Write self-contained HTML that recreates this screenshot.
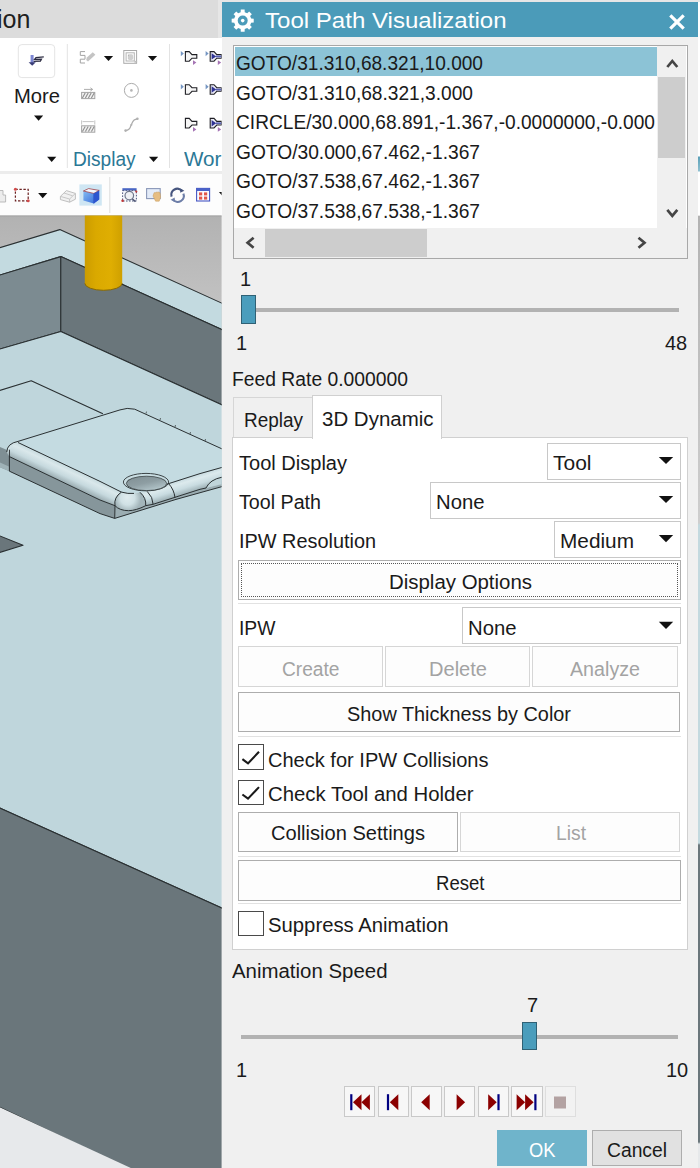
<!DOCTYPE html>
<html lang="en"><head><meta charset="utf-8"><title>Tool Path Visualization</title>
<style>
html,body{margin:0;padding:0}
body{width:700px;height:1168px;overflow:hidden;position:relative;background:#f0f0f0;font-family:'Liberation Sans', sans-serif}
.t{position:absolute;white-space:pre;transform-origin:0 0;display:block}
.b{position:absolute;box-sizing:border-box}
svg{position:absolute;left:0;top:0}

.btn{background:#fdfdfd;border:1px solid #adadad}
.dd{background:#fff;border:1px solid #c8c8c8}
.cb{background:#fff;border:1px solid #4a4a4a}
.pb{background:#f7f7f7;border:1px solid #c9c9c9}

</style></head><body>
<div class="b " style="left:0px;top:0px;width:222px;height:38px;background:#dcdcdc"></div><div class="b " style="left:0px;top:38px;width:222px;height:134px;background:#fff"></div><div class="b " style="left:0px;top:171px;width:222px;height:3px;background:#ececec"></div><div class="b " style="left:0px;top:174px;width:222px;height:42px;background:#fdfdfd"></div><svg width="222" height="1168" viewBox="0 0 222 1168"><defs>
<linearGradient id="bg" x1="0" y1="0" x2="0" y2="1"><stop offset="0" stop-color="#b2b2b2"/><stop offset="1" stop-color="#c8c8c8"/></linearGradient>
<linearGradient id="tool" x1="0" y1="0" x2="1" y2="0"><stop offset="0" stop-color="#cc9c00"/><stop offset="0.3" stop-color="#daa900"/><stop offset="0.7" stop-color="#dfae02"/><stop offset="1" stop-color="#cfa000"/></linearGradient>
<linearGradient id="fil1" gradientUnits="userSpaceOnUse" x1="60" y1="462.4" x2="52.6" y2="478"><stop offset="0" stop-color="#c6dade"/><stop offset="0.25" stop-color="#dae8eb"/><stop offset="0.6" stop-color="#c6d9de"/><stop offset="0.85" stop-color="#a7b9be"/><stop offset="1" stop-color="#94a6ab"/></linearGradient>
<linearGradient id="fil2" gradientUnits="userSpaceOnUse" x1="180" y1="480" x2="184.4" y2="494.4"><stop offset="0" stop-color="#c8dbe0"/><stop offset="0.25" stop-color="#dceaed"/><stop offset="0.6" stop-color="#c9dce1"/><stop offset="0.85" stop-color="#adc0c5"/><stop offset="1" stop-color="#9cafb4"/></linearGradient><radialGradient id="corn" gradientUnits="userSpaceOnUse" cx="128" cy="498.5" r="13" fx="127" fy="497"><stop offset="0" stop-color="#e0ecef"/><stop offset="0.55" stop-color="#d0e1e5"/><stop offset="1" stop-color="#a3b5ba"/></radialGradient>
<linearGradient id="hole" x1="0.1" y1="0" x2="0.75" y2="1"><stop offset="0" stop-color="#808f94"/><stop offset="0.5" stop-color="#8e9ea3"/><stop offset="0.85" stop-color="#aabcc1"/><stop offset="1" stop-color="#bccfd4"/></linearGradient>
<clipPath id="vp"><rect x="0" y="215.5" width="221.6" height="953"/></clipPath>
</defs><g clip-path="url(#vp)" stroke-linejoin="round"><rect x="0" y="215" width="222" height="125" fill="url(#bg)"/><rect x="0" y="215.3" width="222" height="1" fill="#9a9a9a"/><polygon points="-3,248.6 59.8,229.6 225,304.6 225,331 60.8,256.6 -3,275.9" fill="#c3dae0" stroke="#2a3032" stroke-width="1.1"/><polygon points="-3,275.9 60.8,256.6 60.8,331.5 -3,349.9" fill="#7c8b91" stroke="#2a3032" stroke-width="1.1"/><polygon points="60.8,256.6 225,331 225,406.2 60.8,331.5" fill="#6a767b" stroke="#2a3032" stroke-width="1.1"/><polygon points="-3,349.9 60.8,331.5 225,406.2 225,909.4 -3,806.7" fill="#bfd6dc" stroke="#2a3032" stroke-width="1.1"/><polygon points="-3,806.7 225,909.4 225,1172 135,1172 -3,1105.8" fill="#6a767b" stroke="#2a3032" stroke-width="1.1"/><polygon points="0,1107.6 133,1169 0,1169" fill="#e7e9eb"/><polyline points="-3,391.3 31.2,380.8 102.9,413.7" fill="none" stroke="#2a3032" stroke-width="1.1"/><path d="M84.8,215 H122.2 V283.3 A18.7,7 0 0 1 84.8,283.3Z" fill="url(#tool)"/><path d="M84.8,283.3 A18.7,7 0 0 0 122.2,283.3" fill="none" stroke="#8a6a00" stroke-width="1"/><polygon points="-3,534.8 23,545.2 -3,553.3" fill="#6a767b" stroke="#2a3032" stroke-width="1.1"/><polygon points="-2,446 9.4,451 9.4,471.2 -2,466.4" fill="#7f8f94"/><polygon points="-2,461.6 9.4,466.8 9.4,471.2 -2,466.4" fill="#9fb2b7"/><polygon points="9.4,456.6 100,500 115,505.7 114.7,518.4 100,513.6 9.4,471.2" fill="#86969b"/><polygon points="114.7,518.4 115,505.7 128.6,510.7 145.7,505.7 153.1,504.3 200,489.3 222,484 222,486.6 176,499.4" fill="#9badb2"/><path d="M18,442.5 L100,481.4 L121.4,492.1 Q113.5,497.5 115,505.7 L100,500 L9.4,456.6 Q6.6,447 18,442.5Z" fill="url(#fil1)"/><path d="M140,492.3 Q147,491.2 168.6,483.6 L200,473.6 L222,467.4 L222,484 L200,489.3 L153.1,504.3 L145.7,505.7 Q146.5,498 140,492.3Z" fill="url(#fil2)"/><path d="M206,488 Q210,479.5 222,477.2 L222,484Z" fill="#c0d5da"/><path d="M121.4,492.1 Q130,494.2 140,492.3 Q146.5,498 145.7,505.7 Q136,510.6 128.6,510.7 Q119.5,510.6 115,505.7 Q113.5,497.5 121.4,492.1Z" fill="url(#corn)"/><path d="M18,441.4 Q8,442.5 6.8,450.5 L8.4,456 Q8.6,446.5 18,442.5Z" fill="#d2e3e7"/><path d="M18,441.4 L120,409.9 Q127,407.3 134.7,409.2 L222,448.9 L222,467.4 L200,473.6 L168.6,483.6 Q147,491.2 140,492.3 Q130,494.2 121.4,492.1 L100,481.4 L18,442.5Z" fill="#c4dbe1"/><ellipse cx="146" cy="482.1" rx="22.6" ry="8.7" fill="#c9dde2" stroke="#2d3335" stroke-width="0.9"/><ellipse cx="146.5" cy="483.4" rx="20.2" ry="7.2" fill="url(#hole)" stroke="#2d3335" stroke-width="0.7"/><path d="M6.8,452 Q7,443.5 18,441.4 L120,409.9 Q127,407.3 134.7,409.2 L222,448.9" stroke="#2a3032" stroke-width="1" fill="none"/><path d="M18,442.5 L100,481.4 L121.4,492.1 Q128,494 134,493.4" stroke="#2a3032" stroke-width="1" fill="none"/><path d="M166.5,484.3 L200,473.6 L222,467.4" stroke="#2a3032" stroke-width="1" fill="none"/><path d="M9.4,449.7 V471.2 L100,513.6 L114.7,518.4 L176,499.4 L222,486.6" stroke="#2a3032" stroke-width="1" fill="none"/><path d="M9.4,456.6 L100,500 L115,505.7 Q119.5,510.6 128.6,510.7 Q136,510.6 145.7,505.7 L153.1,504.3 L200,489.3 L206,488 Q210,479.5 222,477.2" stroke="#2a3032" stroke-width="1" fill="none"/><path d="M115,505.7 L114.7,518.4" stroke="#2a3032" stroke-width="1" fill="none"/><path d="M121.4,492.1 Q113.5,497.5 115,505.7" stroke="#2a3032" stroke-width="1" fill="none"/><path d="M140,492.3 Q146.5,498 145.7,505.7" stroke="#2a3032" stroke-width="1" fill="none"/><path d="M147.2,491.4 Q153,497 153.1,504.3" stroke="#2a3032" stroke-width="1" fill="none"/><path d="M168.6,483.6 Q174,489.5 175,497.6" stroke="#2a3032" stroke-width="1" fill="none"/><line x1="146" y1="413.6" x2="146.5" y2="411.6" stroke="#2d3335" stroke-width="0.7"/><line x1="160" y1="420" x2="160.5" y2="418" stroke="#2d3335" stroke-width="0.7"/><line x1="175" y1="427" x2="175.5" y2="425" stroke="#2d3335" stroke-width="0.7"/><line x1="190" y1="434" x2="190.5" y2="432" stroke="#2d3335" stroke-width="0.7"/><line x1="205" y1="441" x2="205.5" y2="439" stroke="#2d3335" stroke-width="0.7"/></g></svg><svg width="222" height="216" viewBox="0 0 222 216"><defs>
<linearGradient id="cube" x1="0" y1="0" x2="1" y2="1"><stop offset="0" stop-color="#8cc4f4"/><stop offset="1" stop-color="#2f63d8"/></linearGradient>
<clipPath id="rb"><rect x="0" y="0" width="221.6" height="216"/></clipPath>
</defs><g clip-path="url(#rb)"><rect x="66.8" y="44" width="1" height="124" fill="#e3e3e3"/><rect x="169" y="44" width="1" height="124" fill="#e3e3e3"/><rect x="109.3" y="177" width="1" height="36" fill="#dcdcdc"/><rect x="18.3" y="44.6" width="36.4" height="33" rx="3.5" fill="#fff" stroke="#e4e4e4" stroke-width="1"/><rect x="30.6" y="55" width="3" height="8.5" fill="#7c86d2"/><path d="M28.6,62.2 h7.2 l-3.6,3.6z" fill="#3b3f78"/><path d="M43.8,56.9 L36,57.6 L34.6,59.4 L41.4,59.2 L40.4,61 L33.6,61.4" fill="none" stroke="#2e2e44" stroke-width="1.3"/><path d="M34.0,115.6 h9.2 l-4.6,5.2z" fill="#111"/><path d="M47.1,156.7 h9.2 l-4.6,5.2z" fill="#111"/><path d="M149.0,156.7 h9.2 l-4.6,5.2z" fill="#111"/><path d="M103.9,55.9 h9.2 l-4.6,5.2z" fill="#111"/><path d="M147.9,55.9 h9.2 l-4.6,5.2z" fill="#111"/><path d="M85,51.6 H80.3 V55.4 H85 V59.2 H80.3 V63 H85" fill="none" stroke="#a4a4a4" stroke-width="1"/><path d="M86.8,57.6 L92.8,52.2 L95.4,54.8 L90.2,59.6 L88,61.5 L86.2,60z" fill="#c4c4c4"/><rect x="123.8" y="50.5" width="12.8" height="12.8" fill="none" stroke="#a9a9a9" stroke-width="1"/><rect x="126.1" y="52.8" width="8.200000000000001" height="8.200000000000001" fill="none" stroke="#b4b4b4" stroke-width="1"/><rect x="128.4" y="55.1" width="3.6000000000000014" height="3.6000000000000014" fill="none" stroke="#a9a9a9" stroke-width="1"/><circle cx="130.6" cy="57.4" r="2.6" fill="#d0d0d0"/><path d="M134,60 l3.6,2 l-2,0.6 l-0.6,2z" fill="#c0c0c0"/><rect x="81.6" y="92.4" width="13.2" height="6.2" fill="#f2f2f2" stroke="#a4a4a4" stroke-width="1"/><line x1="82.4" y1="98.00000000000001" x2="85.2" y2="93.0" stroke="#8e8e8e" stroke-width="1.1"/><line x1="85.4" y1="98.00000000000001" x2="88.2" y2="93.0" stroke="#8e8e8e" stroke-width="1.1"/><line x1="88.4" y1="98.00000000000001" x2="91.2" y2="93.0" stroke="#8e8e8e" stroke-width="1.1"/><line x1="91.4" y1="98.00000000000001" x2="94.2" y2="93.0" stroke="#8e8e8e" stroke-width="1.1"/><path d="M84,89.4 H92.4 M90.4,87.8 L92.6,89.4 L90.4,91" fill="none" stroke="#a4a4a4" stroke-width="0.9"/><circle cx="131.4" cy="90.4" r="7" fill="none" stroke="#ababab" stroke-width="1"/><circle cx="131.4" cy="90.4" r="1.3" fill="#b5b5b5"/><rect x="81.6" y="125.8" width="13.2" height="6.4" fill="#f2f2f2" stroke="#a4a4a4" stroke-width="1"/><line x1="82.4" y1="131.6" x2="85.2" y2="126.39999999999999" stroke="#8e8e8e" stroke-width="1.1"/><line x1="85.4" y1="131.6" x2="88.2" y2="126.39999999999999" stroke="#8e8e8e" stroke-width="1.1"/><line x1="88.4" y1="131.6" x2="91.2" y2="126.39999999999999" stroke="#8e8e8e" stroke-width="1.1"/><line x1="91.4" y1="131.6" x2="94.2" y2="126.39999999999999" stroke="#8e8e8e" stroke-width="1.1"/><path d="M81.6,124.6 V120.4 M94.8,124.6 V120.4 M82.6,121.6 H93.8" fill="none" stroke="#bdbdbd" stroke-width="0.9"/><path d="M125.6,130.6 C131.4,130 130,126 131.4,124.6 C132.8,122 132.4,119.4 137.4,118.8" fill="none" stroke="#ababab" stroke-width="1.3"/><circle cx="125.6" cy="130.6" r="1.3" fill="#b0b0b0"/><circle cx="137.4" cy="118.8" r="1.3" fill="#b0b0b0"/><circle cx="131.4" cy="124.7" r="1" fill="#b0b0b0"/><path d="M180.8,50.900000000000006 l3,2.7 l-3,2.7z" fill="#7495c2"/><path d="M185.4,51.6 H189.2 L192,54.6 H196.8 V58.2 H192 L189.2,61.2 H185.4Z" fill="#f6f6f6" stroke="#1f1f24" stroke-width="1.1"/><path d="M193,60.2 l3.4,2.4 l-3.4,2.4z" fill="#a574b4"/><path d="M205.60000000000002,50.900000000000006 l3,2.7 l-3,2.7z" fill="#7495c2"/><path d="M210.20000000000002,51.6 H214.0 L216.8,54.6 H221.60000000000002 V58.2 H216.8 L214.0,61.2 H210.20000000000002Z" fill="#e9e9f4" stroke="#1f1f24" stroke-width="1.1"/><path d="M211.60000000000002,53.2 L216.20000000000002,56.400000000000006 L211.60000000000002,59.6z" fill="#2f3392"/><rect x="216.0" y="55.6" width="5.4" height="1.7" fill="#5a62b4"/><path d="M217.8,60.2 l3.4,2.4 l-3.4,2.4z" fill="#a574b4"/><path d="M180.8,84.0 l3,2.7 l-3,2.7z" fill="#7495c2"/><path d="M185.4,84.7 H189.2 L192,87.7 H196.8 V91.3 H192 L189.2,94.3 H185.4Z" fill="#f6f6f6" stroke="#1f1f24" stroke-width="1.1"/><path d="M205.60000000000002,84.0 l3,2.7 l-3,2.7z" fill="#7495c2"/><path d="M210.20000000000002,84.7 H214.0 L216.8,87.7 H221.60000000000002 V91.3 H216.8 L214.0,94.3 H210.20000000000002Z" fill="#e9e9f4" stroke="#1f1f24" stroke-width="1.1"/><path d="M211.60000000000002,86.3 L216.20000000000002,89.5 L211.60000000000002,92.7z" fill="#2f3392"/><rect x="216.0" y="88.7" width="5.4" height="1.7" fill="#5a62b4"/><path d="M185.4,118.4 H189.2 L192,121.4 H196.8 V125 H192 L189.2,128 H185.4Z" fill="#f6f6f6" stroke="#1f1f24" stroke-width="1.1"/><path d="M193,127 l3.4,2.4 l-3.4,2.4z" fill="#a574b4"/><path d="M210.20000000000002,118.4 H214.0 L216.8,121.4 H221.60000000000002 V125 H216.8 L214.0,128 H210.20000000000002Z" fill="#e9e9f4" stroke="#1f1f24" stroke-width="1.1"/><path d="M211.60000000000002,120 L216.20000000000002,123.2 L211.60000000000002,126.4z" fill="#2f3392"/><rect x="216.0" y="122.4" width="5.4" height="1.7" fill="#5a62b4"/><path d="M217.8,127 l3.4,2.4 l-3.4,2.4z" fill="#a574b4"/><path d="M0,190.5 H3 V195 H5.6 V202 H0" fill="#ececec" stroke="#b4b4b4" stroke-width="0.9"/><rect x="15.4" y="189.4" width="12.8" height="11.4" fill="none" stroke="#6b2222" stroke-width="1.2" stroke-dasharray="2.4,1.6"/><circle cx="15.4" cy="189.3" r="1.5" fill="#d24a4a"/><circle cx="28.2" cy="200.8" r="1.5" fill="#d24a4a"/><path d="M38.1,193.0 h9.2 l-4.6,5.2z" fill="#111"/><path d="M60.4,196.4 L66.4,190.6 L75.4,193.4 L75.4,199.2 L69.6,202.2 L60.4,199.6Z" fill="#f1f1f1" stroke="#b9b9b9" stroke-width="0.9"/><path d="M60.4,196.4 L69.6,199 L75.4,193.4 M69.6,199 V202.2 M64,193 L72.6,195.8" fill="none" stroke="#c2c2c2" stroke-width="0.9"/><rect x="79.4" y="184.4" width="22.4" height="21.2" fill="#cfe6f3"/><path d="M83.4,191 L88.6,188.6 L99.2,190.4 L99.2,199.6 L93.8,203.4 L83.4,200.6Z" fill="url(#cube)"/><path d="M83.4,191 L88.6,188.6 L99.2,190.4 L93.8,193.4Z" fill="#f4f8ff" stroke="#a03030" stroke-width="0.7"/><path d="M93.8,193.4 V203.4" stroke="#2a50c0" stroke-width="0.7"/><path d="M93.8,193.4 L99.2,190.4 V199.6 L93.8,203.4Z" fill="#2d55cf"/><rect x="122.4" y="188.2" width="14.2" height="2.6" fill="#4a66c4"/><rect x="122.6" y="190.6" width="13.8" height="10.4" fill="#f4f6fb" stroke="#505a80" stroke-width="1" stroke-dasharray="1.6,1.4"/><circle cx="129.3" cy="195.6" r="4.3" fill="#eef0f4" stroke="#70788c" stroke-width="1.2"/><circle cx="122.6" cy="200.8" r="1.3" fill="#c03838"/><circle cx="136.3" cy="191.6" r="1.1" fill="#c03838"/><path d="M132.4,199 l3,2.6" stroke="#4a5270" stroke-width="1.4"/><rect x="146.6" y="188.6" width="13.6" height="10" fill="#e3ebf8" stroke="#8a98b8" stroke-width="1.1"/><path d="M153,196 l1.2,-3.4 l1.2,0.4 l0.6,-1 l1.2,0.4 l0.8,-0.6 l1.2,0.8 l0.8,0 l0.6,4.6 l-1.4,4 l-3.6,0 z" fill="#e6bd82" stroke="#c79a5a" stroke-width="0.5"/><path d="M171.6,196.6 A6,6 0 0 1 182,191" fill="none" stroke="#46557e" stroke-width="2.2"/><path d="M183.4,193.6 A6,6 0 0 1 173,199.4" fill="none" stroke="#6d7ea8" stroke-width="2.2"/><path d="M180.4,188.4 l4,2.4 l-4.2,2z" fill="#46557e"/><path d="M174.6,202 l-4,-2.2 l4.2,-2.2z" fill="#6d7ea8"/><rect x="196.6" y="188.4" width="13" height="12.6" fill="#fbfbff" stroke="#4656c4" stroke-width="1.1"/><rect x="196.6" y="188.4" width="13" height="2.6" fill="#4a62c8"/><rect x="199" y="192.4" width="3.2" height="3" fill="#e2574a"/><rect x="204" y="192.4" width="3.2" height="3" fill="#e2574a"/><rect x="199" y="196.6" width="3.2" height="3" fill="#e2574a"/><rect x="204" y="196.6" width="3.2" height="3" fill="#e2574a"/><path d="M218.9,192.0 h9.2 l-4.6,5.2z" fill="#111"/></g></svg><div class="b " style="left:217.6px;top:0px;width:4.4px;height:38px;background:#e6e6e6"></div><div class="b " style="left:222px;top:0px;width:478px;height:1168px;background:#f0f0f0"></div><div class="b " style="left:697.7px;top:0px;width:2.3px;height:1168px;background:linear-gradient(180deg,#e6e6e6 0,#e6e6e6 2px,#fff 2px,#fff 156px,#5aa0b8 157px,#8fc0d0 171px,#fff 172px,#fff 215px,#b2b2b2 216.5px,#cecece 523px,#c3d9df 525px,#c3d9df 843px,#6a767b 845px,#6a767b 1142px,#e6e8ea 1144px)"></div><div class="b " style="left:218px;top:0px;width:482px;height:2px;background:#e6e6e6"></div><div class="b " style="left:222px;top:2px;width:476px;height:35px;background:#4b9bb9"></div><div class="b " style="left:233px;top:45px;width:454.5px;height:213.6px;background:#fff;border:1px solid #a8a8a8"></div><div class="b " style="left:235px;top:47px;width:422px;height:29px;background:#8cc3d6"></div><div class="b " style="left:657px;top:46px;width:29px;height:182px;background:#f0f0f0"></div><div class="b " style="left:658px;top:77px;width:27px;height:81px;background:#cdcdcd"></div><div class="b " style="left:234px;top:228px;width:452.5px;height:29.6px;background:#f0f0f0"></div><div class="b " style="left:265px;top:229px;width:162.4px;height:27.6px;background:#cdcdcd"></div><div class="b " style="left:241px;top:308px;width:438px;height:3.8px;background:#b2b2b2"></div><div class="b " style="left:241px;top:295.2px;width:15px;height:28.6px;background:#4a9dbc;border:1px solid #2f6175"></div><div class="b " style="left:233px;top:397px;width:80px;height:42px;background:#f0f0f0;border:1px solid #d6d6d6"></div><div class="b " style="left:232px;top:437px;width:456px;height:512.5px;background:#fff;border:1px solid #d0d0d0"></div><div class="b " style="left:312px;top:395px;width:130px;height:44px;background:#fff;border:1px solid #d0d0d0;border-bottom:none"></div><div class="b dd" style="left:547px;top:443px;width:134px;height:37px;"></div><div class="b dd" style="left:430px;top:482px;width:251px;height:37px;"></div><div class="b dd" style="left:554px;top:521px;width:127px;height:37px;"></div><div class="b dd" style="left:462px;top:607px;width:219px;height:37px;"></div><div class="b btn" style="left:238px;top:560px;width:443px;height:40px;"></div><div class="b " style="left:241px;top:563px;width:437px;height:34px;border:1px dotted #555"></div><div class="b btn" style="left:238px;top:646px;width:145px;height:41px;border-color:#d6d6d6"></div><div class="b btn" style="left:385px;top:646px;width:145px;height:41px;border-color:#d6d6d6"></div><div class="b btn" style="left:532px;top:646px;width:145.6px;height:41px;border-color:#d6d6d6"></div><div class="b btn" style="left:238px;top:691.5px;width:441.5px;height:40.5px;"></div><div class="b " style="left:238px;top:736px;width:443px;height:1px;background:#e2e2e2"></div><div class="b cb" style="left:238px;top:744.3px;width:25.6px;height:25.4px;"></div><div class="b cb" style="left:238px;top:779.7px;width:25.6px;height:25.4px;"></div><div class="b btn" style="left:238px;top:811.5px;width:220px;height:40.3px;"></div><div class="b btn" style="left:460px;top:811.5px;width:219.5px;height:40.3px;border-color:#d6d6d6"></div><div class="b " style="left:238px;top:855.5px;width:443px;height:1px;background:#e2e2e2"></div><div class="b " style="left:238px;top:903.3px;width:443px;height:1px;background:#e2e2e2"></div><div class="b " style="left:238px;top:603.4px;width:443px;height:1px;background:#e2e2e2"></div><div class="b btn" style="left:238px;top:860px;width:443px;height:40.6px;"></div><div class="b cb" style="left:238px;top:911px;width:25.6px;height:25.4px;"></div><div class="b " style="left:241px;top:1034.9px;width:437px;height:3.8px;background:#b2b2b2"></div><div class="b " style="left:522.4px;top:1022px;width:15px;height:28.2px;background:#4a9dbc;border:1px solid #2f6175"></div><div class="b pb" style="left:344.1px;top:1086.3px;width:31.2px;height:30.8px;"></div><div class="b pb" style="left:377.7px;top:1086.3px;width:31.2px;height:30.8px;"></div><div class="b pb" style="left:411px;top:1086.3px;width:31.2px;height:30.8px;"></div><div class="b pb" style="left:444.2px;top:1086.3px;width:31.2px;height:30.8px;"></div><div class="b pb" style="left:477.8px;top:1086.3px;width:31.2px;height:30.8px;"></div><div class="b pb" style="left:511.4px;top:1086.3px;width:31.2px;height:30.8px;"></div><div class="b pb" style="left:544.9px;top:1086.3px;width:31.2px;height:30.8px;border-color:#dedede;background:#f2f2f2"></div><div class="b " style="left:497px;top:1129.8px;width:90px;height:36.2px;background:#6fb4cb"></div><div class="b " style="left:592px;top:1129.8px;width:90.4px;height:36.2px;background:#e1e1e1;border:1px solid #adadad"></div><svg width="700" height="1168" viewBox="0 0 700 1168" style="pointer-events:none"><path d="M251.16,18.57 L253.73,18.67 L253.73,22.53 L251.16,22.63 L250.12,25.15 L251.86,27.04 L249.14,29.76 L247.25,28.02 L244.73,29.06 L244.63,31.63 L240.77,31.63 L240.67,29.06 L238.15,28.02 L236.26,29.76 L233.54,27.04 L235.28,25.15 L234.24,22.63 L231.67,22.53 L231.67,18.67 L234.24,18.57 L235.28,16.05 L233.54,14.16 L236.26,11.44 L238.15,13.18 L240.67,12.14 L240.77,9.57 L244.63,9.57 L244.73,12.14 L247.25,13.18 L249.14,11.44 L251.86,14.16 L250.12,16.05Z M247.70,20.60 a5.0,5.0 0 1,0 -10.0,0 a5.0,5.0 0 1,0 10.0,0Z" fill="#fff" fill-rule="evenodd"/><circle cx="242.7" cy="20.6" r="1.8" fill="#fff"/><path d="M670.3,15.3 L683.7,28.7 M683.7,15.3 L670.3,28.7" stroke="#fff" stroke-width="3.2" fill="none"/><path d="M667.3,67 L672.3,61 L677.3,67" stroke="#454545" stroke-width="2.7" fill="none"/><path d="M667.3,209.8 L672.3,215.8 L677.3,209.8" stroke="#454545" stroke-width="2.7" fill="none"/><path d="M253.6,237.8 L247.6,242.8 L253.6,247.8" stroke="#454545" stroke-width="2.7" fill="none"/><path d="M638.5,237.8 L644.5,242.8 L638.5,247.8" stroke="#454545" stroke-width="2.7" fill="none"/><path d="M658.8,456.9 h14.4 l-7.2,7.2z" fill="#111"/><path d="M658.8,495.9 h14.4 l-7.2,7.2z" fill="#111"/><path d="M658.8,535.0 h14.4 l-7.2,7.2z" fill="#111"/><path d="M658.8,621.6999999999999 h14.4 l-7.2,7.2z" fill="#111"/><path d="M242.4,759.2 L248,763.4 L259,751.8" stroke="#1a1a1a" stroke-width="2.1" fill="none"/><path d="M242.4,794.5 L248,798.6999999999999 L259,787.0999999999999" stroke="#1a1a1a" stroke-width="2.1" fill="none"/><rect x="350.2" y="1094.2" width="2.2" height="16" fill="#000080"/><path d="M353,1102.2 l8.5,-8 v16z" fill="#8b0000"/><path d="M361.4,1102.2 l8.5,-8 v16z" fill="#8b0000"/><rect x="386.9" y="1094.2" width="2.2" height="16" fill="#000080"/><path d="M389.8,1102.2 l8.5,-8 v16z" fill="#8b0000"/><path d="M421.2,1102.2 l8.5,-8 v16z" fill="#8b0000"/><path d="M465.1,1102.2 l-8.5,-8 v16z" fill="#8b0000"/><path d="M496.7,1102.2 l-8.5,-8 v16z" fill="#8b0000"/><rect x="497.4" y="1094.2" width="2.2" height="16" fill="#000080"/><path d="M525.1,1102.2 l-8.5,-8 v16z" fill="#8b0000"/><path d="M533.6,1102.2 l-8.5,-8 v16z" fill="#8b0000"/><rect x="534.3" y="1094.2" width="2.2" height="16" fill="#000080"/><rect x="554" y="1096.5" width="12" height="12" fill="#b3a2a2"/></svg>
<span class="t" style="left:-3.4px;top:7.2px;font-size:25.5px;line-height:25.5px;color:#202020;font-weight:400;transform:scaleX(0.9815)">ion</span><span class="t" style="left:13.8px;top:86.5px;font-size:19.5px;line-height:19.5px;color:#1a1a1a;font-weight:400;transform:scaleX(1.0352)">More</span><span class="t" style="left:73.0px;top:150.3px;font-size:19.5px;line-height:19.5px;color:#2b7896;font-weight:400;transform:scaleX(0.9791)">Display</span><span class="t" style="left:183.6px;top:150.3px;font-size:19.5px;line-height:19.5px;color:#2b7896;font-weight:400;transform:scaleX(1.0563)">Wor</span><span class="t" style="left:265.3px;top:10.0px;font-size:22.5px;line-height:22.5px;color:#fff;font-weight:400;transform:scaleX(1.0687)">Tool Path Visualization</span><span class="t" style="left:236.3px;top:53.1px;font-size:20px;line-height:20px;color:#1a1a1a;font-weight:400;transform:scaleX(0.9547)">GOTO/31.310,68.321,10.000</span><span class="t" style="left:236.3px;top:82.6px;font-size:20px;line-height:20px;color:#1a1a1a;font-weight:400;transform:scaleX(0.9572)">GOTO/31.310,68.321,3.000</span><span class="t" style="left:236.3px;top:112.1px;font-size:20px;line-height:20px;color:#1a1a1a;font-weight:400;transform:scaleX(0.9564)">CIRCLE/30.000,68.891,-1.367,-0.0000000,-0.000</span><span class="t" style="left:236.3px;top:141.6px;font-size:20px;line-height:20px;color:#1a1a1a;font-weight:400;transform:scaleX(0.9597)">GOTO/30.000,67.462,-1.367</span><span class="t" style="left:236.3px;top:171.1px;font-size:20px;line-height:20px;color:#1a1a1a;font-weight:400;transform:scaleX(0.9597)">GOTO/37.538,67.462,-1.367</span><span class="t" style="left:236.3px;top:200.6px;font-size:20px;line-height:20px;color:#1a1a1a;font-weight:400;transform:scaleX(0.9597)">GOTO/37.538,67.538,-1.367</span><span class="t" style="left:240.0px;top:268.5px;font-size:20px;line-height:20px;color:#1a1a1a;font-weight:400;transform:scaleX(0.9980)">1</span><span class="t" style="left:236.4px;top:332.8px;font-size:20px;line-height:20px;color:#1a1a1a;font-weight:400;transform:scaleX(0.9980)">1</span><span class="t" style="left:665.2px;top:332.8px;font-size:20px;line-height:20px;color:#1a1a1a;font-weight:400;transform:scaleX(0.9980)">48</span><span class="t" style="left:231.7px;top:368.5px;font-size:20px;line-height:20px;color:#1a1a1a;font-weight:400;transform:scaleX(0.9650)">Feed Rate 0.000000</span><span class="t" style="left:244.4px;top:409.5px;font-size:20px;line-height:20px;color:#1a1a1a;font-weight:400;transform:scaleX(0.9476)">Replay</span><span class="t" style="left:321.8px;top:409.0px;font-size:20px;line-height:20px;color:#1a1a1a;font-weight:400;transform:scaleX(1.0237)">3D Dynamic</span><span class="t" style="left:239.0px;top:452.8px;font-size:20px;line-height:20px;color:#1a1a1a;font-weight:400;transform:scaleX(1.0016)">Tool Display</span><span class="t" style="left:552.5px;top:452.8px;font-size:20px;line-height:20px;color:#1a1a1a;font-weight:400;transform:scaleX(1.0490)">Tool</span><span class="t" style="left:239.0px;top:491.8px;font-size:20px;line-height:20px;color:#1a1a1a;font-weight:400;transform:scaleX(0.9833)">Tool Path</span><span class="t" style="left:436.0px;top:491.8px;font-size:20px;line-height:20px;color:#1a1a1a;font-weight:400;transform:scaleX(1.0144)">None</span><span class="t" style="left:239.0px;top:530.8px;font-size:20px;line-height:20px;color:#1a1a1a;font-weight:400;transform:scaleX(0.9939)">IPW Resolution</span><span class="t" style="left:560.0px;top:530.8px;font-size:20px;line-height:20px;color:#1a1a1a;font-weight:400;transform:scaleX(1.0402)">Medium</span><span class="t" style="left:388.5px;top:572.0px;font-size:20px;line-height:20px;color:#1a1a1a;font-weight:400;transform:scaleX(1.0210)">Display Options</span><span class="t" style="left:239.0px;top:617.5px;font-size:20px;line-height:20px;color:#1a1a1a;font-weight:400;transform:scaleX(0.9661)">IPW</span><span class="t" style="left:468.0px;top:617.5px;font-size:20px;line-height:20px;color:#1a1a1a;font-weight:400;transform:scaleX(1.0144)">None</span><span class="t" style="left:281.6px;top:659.2px;font-size:20px;line-height:20px;color:#a3a3a3;font-weight:400;transform:scaleX(0.9578)">Create</span><span class="t" style="left:428.5px;top:659.2px;font-size:20px;line-height:20px;color:#a3a3a3;font-weight:400;transform:scaleX(1.0032)">Delete</span><span class="t" style="left:570.0px;top:659.2px;font-size:20px;line-height:20px;color:#a3a3a3;font-weight:400;transform:scaleX(0.9838)">Analyze</span><span class="t" style="left:347.0px;top:703.9px;font-size:20px;line-height:20px;color:#1a1a1a;font-weight:400;transform:scaleX(0.9942)">Show Thickness by Color</span><span class="t" style="left:267.7px;top:749.5px;font-size:20px;line-height:20px;color:#1a1a1a;font-weight:400;transform:scaleX(1.0020)">Check for IPW Collisions</span><span class="t" style="left:267.7px;top:784.0px;font-size:20px;line-height:20px;color:#1a1a1a;font-weight:400;transform:scaleX(1.0174)">Check Tool and Holder</span><span class="t" style="left:271.0px;top:823.1px;font-size:20px;line-height:20px;color:#1a1a1a;font-weight:400;transform:scaleX(1.0038)">Collision Settings</span><span class="t" style="left:556.0px;top:823.1px;font-size:20px;line-height:20px;color:#a3a3a3;font-weight:400;transform:scaleX(0.9639)">List</span><span class="t" style="left:436.0px;top:873.0px;font-size:20px;line-height:20px;color:#1a1a1a;font-weight:400;transform:scaleX(0.9282)">Reset</span><span class="t" style="left:267.7px;top:915.3px;font-size:20px;line-height:20px;color:#1a1a1a;font-weight:400;transform:scaleX(1.0147)">Suppress Animation</span><span class="t" style="left:232.0px;top:960.5px;font-size:20px;line-height:20px;color:#1a1a1a;font-weight:400;transform:scaleX(1.0208)">Animation Speed</span><span class="t" style="left:526.6px;top:995.3px;font-size:20px;line-height:20px;color:#1a1a1a;font-weight:400;transform:scaleX(0.9980)">7</span><span class="t" style="left:236.4px;top:1059.5px;font-size:20px;line-height:20px;color:#1a1a1a;font-weight:400;transform:scaleX(0.9980)">1</span><span class="t" style="left:666.2px;top:1059.5px;font-size:20px;line-height:20px;color:#1a1a1a;font-weight:400;transform:scaleX(0.9980)">10</span><span class="t" style="left:529.3px;top:1139.9px;font-size:20px;line-height:20px;color:#fff;font-weight:400;transform:scaleX(0.9168)">OK</span><span class="t" style="left:607.0px;top:1139.9px;font-size:20px;line-height:20px;color:#1a1a1a;font-weight:400;transform:scaleX(0.9636)">Cancel</span>
</body></html>
